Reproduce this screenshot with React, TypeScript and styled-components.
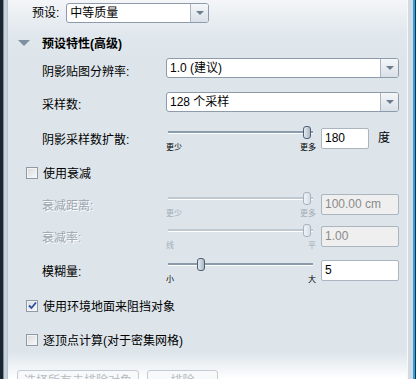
import * as React from 'react'
import styled, { createGlobalStyle, css } from 'styled-components'

const GlobalStyle = createGlobalStyle`
  html, body {
    margin: 0;
    padding: 0;
    background: #ffffff;
  }
  body {
    font-family: "Liberation Sans", "Noto Sans CJK SC", sans-serif;
    font-size: 12px;
    color: #000;
  }
`

const Frame = styled.div`
  display: flex;
  width: 416px;
  height: 379px;
  overflow: hidden;
`

const LeftEdge = styled.div`
  width: 8px;
  flex: none;
  background: linear-gradient(to right, #1b2633 0 3px, #7f8d9b 3px 4px, #c9d3dc 4px 7px, #b8c3cd 7px 8px);
`

const RightEdge = styled.div`
  width: 9px;
  flex: none;
  background: linear-gradient(to right, #f7f9fb 0 1px, #d3dbe2 1px 6px, #2d9fdc 6px 8px, #163552 8px 9px);
`

const Panel = styled.div`
  flex: 1;
  display: flex;
  flex-direction: column;
  padding: 3px 8px 0 0;
  background: linear-gradient(to bottom, #f4f6f8 0px, #e0e7ed 34px, #dde5eb 60px, #dde5eb 352px, #ffffff 379px);
`

const PresetRow = styled.div`
  display: flex;
  align-items: center;
  gap: 7px;
  height: 20px;
  padding-left: 24px;
`

const Label = styled.span<{ $disabled?: boolean }>`
  white-space: nowrap;
  line-height: 20px;
  ${({ $disabled }) => $disabled && css`
    color: #9da6af;
    text-shadow: 1px 1px 0 #ffffff;
  `}
`

const SelectBox = styled.div<{ $width: number }>`
  display: flex;
  width: ${({ $width }) => $width}px;
  height: 20px;
  box-sizing: border-box;
  border: 1px solid #8e9baa;
  border-radius: 3px;
  background: #fff;
  overflow: hidden;
`

const SelectText = styled.div`
  flex: 1;
  padding-left: 3px;
  line-height: 18px;
  white-space: nowrap;
`

const DropButton = styled.div`
  width: 17px;
  flex: none;
  border-left: 1px solid #a9b5c1;
  background: linear-gradient(to bottom, #f5f7f9, #d9e0e7);
  display: flex;
  align-items: center;
  justify-content: center;
  &::after {
    content: '';
    border-left: 4px solid transparent;
    border-right: 4px solid transparent;
    border-top: 4px solid #6c7d8e;
  }
`

const Header = styled.div`
  display: flex;
  align-items: center;
  height: 20px;
  margin-top: 11px;
  padding-left: 10px;
  font-weight: bold;
`

const Caret = styled.span`
  width: 0;
  height: 0;
  border-left: 6px solid transparent;
  border-right: 6px solid transparent;
  border-top: 6px solid #7d8fa1;
  margin-right: 12px;
`

const Row = styled.div<{ $top: number }>`
  display: flex;
  align-items: flex-start;
  margin-top: ${({ $top }) => $top}px;
  padding-left: 34px;
`

const RowLabel = styled(Label)<{ $drop?: number }>`
  display: block;
  width: 124px;
  height: 20px;
  box-sizing: border-box;
  flex: none;
  padding-top: ${({ $drop }) => $drop ?? 0}px;
`

const SliderBox = styled.div`
  width: 150px;
  height: 26px;
  flex: none;
  display: flex;
  flex-direction: column;
`

const TrackArea = styled.div`
  position: relative;
  height: 13px;
  margin: 0 3px 0 2px;
`

const Track = styled.div<{ $disabled?: boolean }>`
  margin-top: 5px;
  height: 2px;
  background: ${({ $disabled }) => ($disabled ? '#bfc9d2' : '#8a9bab')};
  box-shadow: 0 1px 0 #ffffff;
`

const Thumb = styled.div<{ $disabled?: boolean }>`
  position: absolute;
  top: 0;
  width: 8px;
  height: 13px;
  box-sizing: border-box;
  margin-left: -4px;
  border-radius: 3px;
  border: 1px solid ${({ $disabled }) => ($disabled ? '#a7b2bc' : '#4f5f70')};
  background: ${({ $disabled }) =>
    $disabled ? 'linear-gradient(to right, #eef2f5, #d8e0e6)' : 'linear-gradient(to right, #e4ebf1, #a9b9c7)'};
`

const TickLabels = styled.div<{ $disabled?: boolean }>`
  display: flex;
  justify-content: space-between;
  margin-top: 6px;
  font-size: 8px;
  line-height: 8px;
  color: ${({ $disabled }) => ($disabled ? '#a3acb5' : '#000')};
`

const Field = styled.div<{ $width: number; $disabled?: boolean }>`
  width: ${({ $width }) => $width}px;
  height: 21px;
  box-sizing: border-box;
  margin: 2px 0 0 5px;
  padding-left: 3px;
  line-height: 19px;
  border: 1px solid #aab5c0;
  border-radius: 2px;
  background: ${({ $disabled }) => ($disabled ? '#efefef' : '#ffffff')};
  color: ${({ $disabled }) => ($disabled ? '#8a8a8a' : '#000')};
`

const Unit = styled.span`
  margin: 2px 0 0 9px;
  line-height: 21px;
`

const CheckRow = styled.label<{ $top: number }>`
  display: flex;
  align-items: center;
  gap: 5px;
  height: 13px;
  margin-top: ${({ $top }) => $top}px;
  padding-left: 18px;
  white-space: nowrap;
`

const Box = styled.span`
  width: 12px;
  height: 12px;
  flex: none;
  box-sizing: border-box;
  border: 1px solid #8e9aa6;
  background: linear-gradient(135deg, #d6d9dc, #fbfbfb);
  box-shadow: inset 0 0 0 1px #f4f4f4;
  display: flex;
  align-items: center;
  justify-content: center;
`

const ButtonBar = styled.div`
  display: flex;
  gap: 8px;
  margin-top: 24px;
  padding-left: 9px;
`

const GhostButton = styled.div<{ $width: number }>`
  width: ${({ $width }) => $width}px;
  height: 22px;
  box-sizing: border-box;
  border: 1px solid #c3ccd4;
  border-radius: 3px;
  background: #f7f9fa;
  color: #b5bcc3;
  text-align: center;
  line-height: 20px;
`

const Check = ({ checked }: { checked?: boolean }) => (
  <Box>
    {checked && (
      <svg width="9" height="9" viewBox="0 0 9 9">
        <path d="M1 4.5 L3.5 7 L8 1.5" fill="none" stroke="#2b4fa3" strokeWidth="1.8" />
      </svg>
    )}
  </Box>
)

type SliderProps = { pos: number; low: string; high: string; disabled?: boolean }

const Slider = ({ pos, low, high, disabled }: SliderProps) => (
  <SliderBox>
    <TrackArea>
      <Track $disabled={disabled} />
      <Thumb $disabled={disabled} style={{ left: `${pos * 100}%` }} />
    </TrackArea>
    <TickLabels $disabled={disabled}>
      <span>{low}</span>
      <span>{high}</span>
    </TickLabels>
  </SliderBox>
)

export default function App() {
  return (
    <Frame>
      <GlobalStyle />
      <LeftEdge />
      <Panel>
        <PresetRow>
          <Label>预设:</Label>
          <SelectBox $width={143}>
            <SelectText>中等质量</SelectText>
            <DropButton />
          </SelectBox>
        </PresetRow>

        <Header>
          <Caret />
          预设特性(高级)
        </Header>

        <Row $top={7}>
          <RowLabel $drop={4}>阴影贴图分辨率:</RowLabel>
          <SelectBox $width={233}>
            <SelectText>1.0 (建议)</SelectText>
            <DropButton />
          </SelectBox>
        </Row>

        <Row $top={14}>
          <RowLabel $drop={3}>采样数:</RowLabel>
          <SelectBox $width={233}>
            <SelectText>128 个采样</SelectText>
            <DropButton />
          </SelectBox>
        </Row>

        <Row $top={14}>
          <RowLabel $drop={4}>阴影采样数扩散:</RowLabel>
          <Slider pos={0.96} low="更少" high="更多" />
          <Field $width={48}>180</Field>
          <Unit>度</Unit>
        </Row>

        <CheckRow $top={14}>
          <Check />
          使用衰减
        </CheckRow>

        <Row $top={13}>
          <RowLabel $drop={4} $disabled>衰减距离:</RowLabel>
          <Slider pos={0.96} low="更少" high="更多" disabled />
          <Field $width={78} $disabled>100.00 cm</Field>
        </Row>

        <Row $top={6}>
          <RowLabel $drop={4} $disabled>衰减率:</RowLabel>
          <Slider pos={0.96} low="线" high="平" disabled />
          <Field $width={78} $disabled>1.00</Field>
        </Row>

        <Row $top={8}>
          <RowLabel $drop={4}>模糊量:</RowLabel>
          <Slider pos={0.23} low="小" high="大" />
          <Field $width={78}>5</Field>
        </Row>

        <CheckRow $top={15}>
          <Check checked />
          使用环境地面来阻挡对象
        </CheckRow>

        <CheckRow $top={21}>
          <Check />
          逐顶点计算(对于密集网格)
        </CheckRow>

        <ButtonBar>
          <GhostButton $width={122}>选择所有未排除对象</GhostButton>
          <GhostButton $width={71}>排除</GhostButton>
        </ButtonBar>
      </Panel>
      <RightEdge />
    </Frame>
  )
}
